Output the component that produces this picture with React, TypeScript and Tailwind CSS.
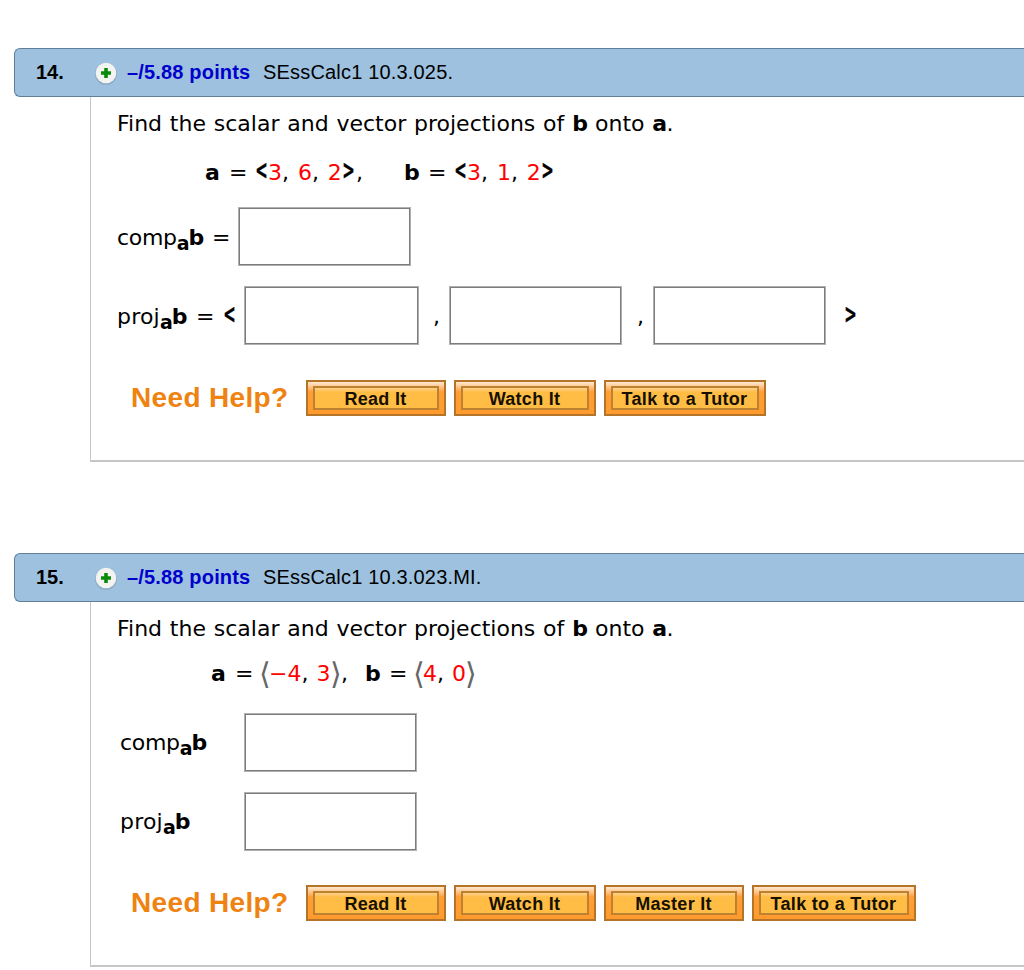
import type { ReactNode } from "react";
import clsx from "clsx";

function Header({ number, code }: { number: string; code: string }) {
  return (
    <div className="ml-[14px] flex h-[49px] items-start rounded-l-md border border-r-0 border-[#5f7f9b] bg-[#9dc1df] pt-[11px] font-['Liberation_Sans',Arial,sans-serif] text-[20px] leading-6 whitespace-pre text-black">
      <span className="w-[79px] pl-[21px] font-bold">{number}</span>
      <svg className="mt-0.5 h-6 w-6" viewBox="0 0 24 24">
        <circle cx="12" cy="12" r="11" fill="#7f98ad" opacity="0.5" />
        <circle cx="12" cy="11" r="10.3" fill="#f3f3f1" />
        <path d="M12 6v10M7 11h10" stroke="#0a8a0a" strokeWidth="3.6" />
      </svg>
      <span className="ml-[9px] w-[136px] font-bold tracking-[0.17px] text-[#0000cc]">–/5.88 points</span>
      <span className="tracking-[0.18px]">{code}</span>
    </div>
  );
}

function Prompt() {
  return (
    <p className="h-[30px] whitespace-nowrap [word-spacing:0.8px]">
      Find the scalar and vector projections of <b className="tracking-[-0.6px]">b</b> onto <b className="tracking-[-0.6px]">a</b>.
    </p>
  );
}

function Label({ name }: { name: string }) {
  return (
    <span className="inline-flex">
      {name}
      <b className="relative top-[5px] -mr-[0.5px] text-[19px] tracking-[-0.5px]">a</b>
      <b>b</b>
    </span>
  );
}

function Chevron({ children }: { children: ReactNode }) {
  return (
    <b className="inline-block w-[13px] origin-[6px_15px] -translate-y-[2px] scale-x-[0.68] scale-y-[1.2] [-webkit-text-stroke:0.4px_black]">
      <span className="-ml-[2.5px]">{children}</span>
    </b>
  );
}

function Angle({ children }: { children: ReactNode }) {
  return <span className="inline-block w-[10px] text-[30px] leading-[30px] text-[#666]">{children}</span>;
}

function Red({ children }: { children: ReactNode }) {
  return <span className="text-[#ff0000]">{children}</span>;
}

function AnswerBox({ className }: { className?: string }) {
  return <input type="text" className={clsx("h-[59px] w-[173px] shrink-0 border border-[#b0b0b0] bg-white shadow-[inset_0_0_0_1px_#7c7c7c] outline-none", className)} />;
}

function HelpButton({ label, className }: { label: string; className: string }) {
  return (
    <button className={clsx("h-9 shrink-0 border-2 border-[#b67428] bg-linear-to-b from-[#ffe9cf] via-[#ff9f38] via-30% to-[#ff9a2d] p-[5px] pt-[4px]", className)}>
      <span className="flex h-[24px] items-center justify-center border-2 border-[#bd822f] bg-linear-to-b from-[#ffd08a] via-[#ffbd45] via-20% to-[#ffbd45] pt-[2px] pr-[1px] font-['Liberation_Sans',Arial,sans-serif] text-[18px] font-bold leading-5 tracking-[0.3px] whitespace-nowrap text-[#161000]">
        {label}
      </span>
    </button>
  );
}

function NeedHelp({ children }: { children: ReactNode }) {
  return (
    <div className="-ml-[2px] flex h-9">
      <span className="ml-4 w-[175px] font-['Liberation_Sans',Arial,sans-serif] text-[28px] font-bold leading-[35px] tracking-[0.35px] whitespace-nowrap text-[#ee8311]">Need Help?</span>
      <div className="flex gap-2">{children}</div>
    </div>
  );
}

function Body({ children }: { children: ReactNode }) {
  return (
    <div className="ml-[90px] h-[365px] border-b-2 border-l border-[#c6c6c6] pt-3 pl-[26px] text-[22px] leading-[30px] text-black">
      {children}
    </div>
  );
}

export default function App() {
  return (
    <main className="h-[970px] w-[1024px] overflow-hidden bg-white pt-12 font-['DejaVu_Sans',Verdana,sans-serif]">
      <section className="h-[505px]">
        <Header number="14." code="SEssCalc1 10.3.025." />
        <Body>
          <Prompt />
          <div className="mt-[19px] flex h-[30px] pl-[88px] whitespace-pre [word-spacing:1.6px]">
            <b className="w-6">a</b>
            <span className="w-[26px]">=</span>
            <Chevron>&lt;</Chevron>
            <span className="w-[74px] tracking-[0.1px]"><Red>3</Red>, <Red>6</Red>, <Red>2</Red></span>
            <Chevron>&gt;</Chevron>
            <span className="w-[49px] pl-[1px]">,</span>
            <b className="w-6">b</b>
            <span className="w-[26px]">=</span>
            <Chevron>&lt;</Chevron>
            <span className="w-[74px] tracking-[0.1px]"><Red>3</Red>, <Red>1</Red>, <Red>2</Red></span>
            <Chevron>&gt;</Chevron>
          </div>
          <div className="mt-[19px] flex h-[59px]">
            <div className="flex w-[121px] pt-4">
              <span className="w-[95px] tracking-[-0.3px]"><Label name="comp" /></span>
              <span>=</span>
            </div>
            <AnswerBox />
          </div>
          <div className="mt-5 flex h-[59px]">
            <div className="flex w-[127px] pt-4">
              <span className="w-[79px] tracking-[0.2px]"><Label name="proj" /></span>
              <span className="w-[27px]">=</span>
              <Chevron>&lt;</Chevron>
            </div>
            <AnswerBox className="w-[175px]" />
            <span className="w-[30px] pt-4 pl-[14px]">,</span>
            <AnswerBox />
            <span className="w-[31px] pt-4 pl-[15px]">,</span>
            <AnswerBox />
            <span className="pt-4 pl-[18px]"><Chevron>&gt;</Chevron></span>
          </div>
          <div className="mt-[35px]">
            <NeedHelp>
              <HelpButton label="Read It" className="w-[140px]" />
              <HelpButton label="Watch It" className="w-[142px]" />
              <HelpButton label="Talk to a Tutor" className="w-[162px]" />
            </NeedHelp>
          </div>
        </Body>
      </section>

      <section>
        <Header number="15." code="SEssCalc1 10.3.023.MI." />
        <Body>
          <Prompt />
          <div className="mt-[15px] flex h-[30px] pl-[94px] whitespace-pre [word-spacing:1px]">
            <b className="w-6">a</b>
            <span className="w-[24px]">=</span>
            <Angle>⟨</Angle>
            <span className="w-[61px]"><Red>−4</Red>, <Red>3</Red></span>
            <Angle>⟩</Angle>
            <span className="w-[25px] pl-[1px]">,</span>
            <b className="w-6">b</b>
            <span className="w-[24px]">=</span>
            <Angle>⟨</Angle>
            <span className="w-[42px]"><Red>4</Red>, <Red>0</Red></span>
            <Angle>⟩</Angle>
          </div>
          <div className="mt-6 flex h-[59px]">
            <span className="w-[127px] pt-[15px] pl-[3px] tracking-[-0.3px]"><Label name="comp" /></span>
            <AnswerBox />
          </div>
          <div className="mt-5 flex h-[59px]">
            <span className="w-[127px] pt-[15px] pl-[3px] tracking-[0.2px]"><Label name="proj" /></span>
            <AnswerBox />
          </div>
          <div className="mt-[34px]">
            <NeedHelp>
              <HelpButton label="Read It" className="w-[140px]" />
              <HelpButton label="Watch It" className="w-[142px]" />
              <HelpButton label="Master It" className="w-[140px]" />
              <HelpButton label="Talk to a Tutor" className="w-[164px]" />
            </NeedHelp>
          </div>
        </Body>
      </section>
    </main>
  );
}
